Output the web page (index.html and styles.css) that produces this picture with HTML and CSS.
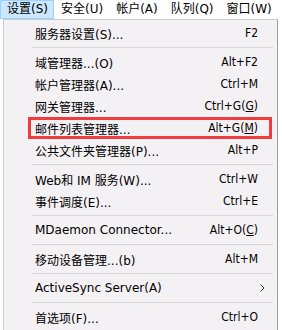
FILE: index.html
```html
<!DOCTYPE html>
<html>
<head>
<meta charset="utf-8">
<link rel="stylesheet" href="styles.css">
</head>
<body>
<div class="screen">
  <div class="menubar">
    <span class="mb-item active">设置(S)</span>
    <span class="mb-item">安全(U)</span>
    <span class="mb-item">帐户(A)</span>
    <span class="mb-item">队列(Q)</span>
    <span class="mb-item">窗口(W)</span>
  </div>
  <div class="menu">
    <div class="item"><span class="label">服务器设置(S)...</span><span class="key">F2</span></div>
    <div class="sep"></div>
    <div class="item"><span class="label">域管理器...(O)</span><span class="key">Alt+F2</span></div>
    <div class="item"><span class="label">帐户管理器(A)...</span><span class="key">Ctrl+M</span></div>
    <div class="item"><span class="label">网关管理器...</span><span class="key">Ctrl+G(<u>G</u>)</span></div>
    <div class="item marked"><span class="label">邮件列表管理器...</span><span class="key">Alt+G(<u>M</u>)</span></div>
    <div class="item"><span class="label">公共文件夹管理器(P)...</span><span class="key">Alt+P</span></div>
    <div class="sep"></div>
    <div class="item"><span class="label">Web和 IM 服务(W)...</span><span class="key">Ctrl+W</span></div>
    <div class="item"><span class="label">事件调度(E)...</span><span class="key">Ctrl+E</span></div>
    <div class="sep"></div>
    <div class="item"><span class="label">MDaemon Connector...</span><span class="key">Alt+O(<u>C</u>)</span></div>
    <div class="sep"></div>
    <div class="item"><span class="label">移动设备管理...(b)</span><span class="key">Alt+M</span></div>
    <div class="sep"></div>
    <div class="item"><span class="label">ActiveSync Server(A)</span><span class="key arrow"><svg width="5" height="8" viewBox="0 0 5 8"><path d="M0.5 0.5 L4 4 L0.5 7.5" fill="none" stroke="#333" stroke-width="1"/></svg></span></div>
    <div class="sep"></div>
    <div class="item"><span class="label">首选项(F)...</span><span class="key">Ctrl+O</span></div>
  </div>
</div>
</body>
</html>
```
FILE: styles.css
```css
html, body {
  margin: 0;
  padding: 0;
  background: #ffffff;
}
body {
  font-family: "DejaVu Sans", "Noto Sans CJK SC", sans-serif;
  font-size: 12px;
  color: #000;
}
.screen {
  width: 282px;
  height: 330px;
  overflow: hidden;
  position: relative;
  background: #ffffff;
}
.menubar {
  display: flex;
  height: 19px;
  background: #ffffff;
}
.mb-item {
  box-sizing: border-box;
  height: 19px;
  line-height: 17px;
  padding: 0 5px 0 6px;
  border: 1px solid transparent;
  white-space: nowrap;
}
.mb-item.active {
  background: #cce8ff;
  border-color: #99d1ff;
}
.menu {
  margin-left: 3px;
  width: 273px;
  border: 1px solid #cccccc;
  border-right-color: #a0a0a0;
  background: #f4f1f4;
  padding-top: 2px;
  padding-bottom: 4px;
}
.item {
  position: relative;
  height: 22px;
  display: flex;
  align-items: center;
  justify-content: space-between;
  padding-left: 31px;
  padding-right: 19px;
  white-space: nowrap;
}
.key {
  font-family: "DejaVu Sans Condensed", "DejaVu Sans", "Liberation Sans", sans-serif;
  font-stretch: condensed;
}
.key u {
  text-underline-offset: 1px;
}
.key.arrow {
  display: flex;
  align-items: center;
  margin-right: -7px;
}
.sep {
  height: 1px;
  margin: 3px 4px 3px 28px;
  background: #d7d7d7;
}
.item.marked::after {
  content: "";
  position: absolute;
  left: 24px;
  right: 5px;
  top: 0;
  bottom: 0;
  border: 3px solid #f23b3b;
}
```
